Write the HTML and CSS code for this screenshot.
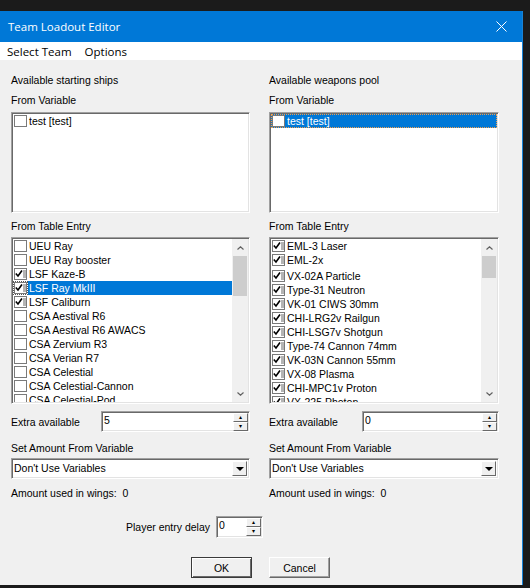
FILE: index.html
```html
<!DOCTYPE html>
<html lang="en">
<head>
  <meta charset="UTF-8">
  <title>Team Loadout Editor</title>
  <link rel="stylesheet" href="styles.css">
</head>
<body>
  <svg class="defs" width="0" height="0">
    <symbol id="cb-off" viewBox="0 0 13 12">
      <rect x="0.5" y="0.5" width="12" height="11" fill="#fff" stroke="#7a7a7a"/>
    </symbol>
    <symbol id="cb-on" viewBox="0 0 13 12">
      <rect x="0.5" y="0.5" width="12" height="11" fill="#fff" stroke="#7a7a7a"/>
      <rect x="9" y="2" width="3" height="8" fill="#b4b4b4"/>
      <path d="M1.8 5.5 L4 8 L8 2.5" fill="none" stroke="#000" stroke-width="1.6"/>
    </symbol>
    <symbol id="up" viewBox="0 0 7 4">
      <path d="M0.5 3.5 L3.5 0.8 L6.5 3.5" fill="none" stroke="#606060" stroke-width="1.2"/>
    </symbol>
    <symbol id="down" viewBox="0 0 7 4">
      <path d="M0.5 0.5 L3.5 3.2 L6.5 0.5" fill="none" stroke="#606060" stroke-width="1.2"/>
    </symbol>
  </svg>

  <div class="window">
    <div class="titlebar">
      <span class="title">Team Loadout Editor</span>
      <svg class="close" width="11" height="11" viewBox="0 0 11 11">
        <path d="M0.5 0.5 L10.5 10.5 M10.5 0.5 L0.5 10.5" stroke="#fff" stroke-width="1"/>
      </svg>
    </div>

    <div class="menubar">
      <span>Select Team</span>
      <span>Options</span>
    </div>

    <div class="client">
      <div class="columns">
        <!-- Ships -->
        <div class="col">
          <div class="label first">Available starting ships</div>
          <div class="label">From Variable</div>
          <div class="listbox var">
            <div class="items">
              <div class="row"><svg class="cb"><use href="#cb-off"/></svg>test [test]</div>
            </div>
          </div>
          <div class="label">From Table Entry</div>
          <div class="listbox table">
            <div class="items">
              <div class="row"><svg class="cb"><use href="#cb-off"/></svg>UEU Ray</div>
              <div class="row"><svg class="cb"><use href="#cb-off"/></svg>UEU Ray booster</div>
              <div class="row"><svg class="cb"><use href="#cb-on"/></svg>LSF Kaze-B</div>
              <div class="row selected"><svg class="cb"><use href="#cb-on"/></svg><span class="text">LSF Ray MkIII</span></div>
              <div class="row"><svg class="cb"><use href="#cb-on"/></svg>LSF Caliburn</div>
              <div class="row"><svg class="cb"><use href="#cb-off"/></svg>CSA Aestival R6</div>
              <div class="row"><svg class="cb"><use href="#cb-off"/></svg>CSA Aestival R6 AWACS</div>
              <div class="row"><svg class="cb"><use href="#cb-off"/></svg>CSA Zervium R3</div>
              <div class="row"><svg class="cb"><use href="#cb-off"/></svg>CSA Verian R7</div>
              <div class="row"><svg class="cb"><use href="#cb-off"/></svg>CSA Celestial</div>
              <div class="row"><svg class="cb"><use href="#cb-off"/></svg>CSA Celestial-Cannon</div>
              <div class="row"><svg class="cb"><use href="#cb-off"/></svg>CSA Celestial-Pod</div>
            </div>
            <div class="scroll">
              <div class="arrow"><svg width="7" height="4"><use href="#up"/></svg></div>
              <div class="track"><div class="thumb ships"></div></div>
              <div class="arrow"><svg width="7" height="4"><use href="#down"/></svg></div>
            </div>
          </div>
          <div class="spinrow">
            <span>Extra available</span>
            <div class="spin wide-left">
              <span class="value">5</span>
              <div class="spinbtns"><div class="sb">&#9652;</div><div class="sb">&#9662;</div></div>
            </div>
          </div>
          <div class="label gap">Set Amount From Variable</div>
          <div class="combo">
            <span class="value">Don't Use Variables</span>
            <div class="drop"><svg width="8" height="4" viewBox="0 0 8 4"><path d="M0 0 H8 L4 4 Z" fill="#000"/></svg></div>
          </div>
          <div class="label used">Amount used in wings:&nbsp; 0</div>
        </div>

        <!-- Weapons -->
        <div class="col">
          <div class="label first">Available weapons pool</div>
          <div class="label">From Variable</div>
          <div class="listbox var">
            <div class="items">
              <div class="row focus"><svg class="cb"><use href="#cb-off"/></svg>test [test]</div>
            </div>
          </div>
          <div class="label">From Table Entry</div>
          <div class="listbox table">
            <div class="items">
              <div class="row"><svg class="cb"><use href="#cb-on"/></svg>EML-3 Laser</div>
              <div class="row spaced"><svg class="cb"><use href="#cb-on"/></svg>EML-2x</div>
              <div class="row"><svg class="cb"><use href="#cb-on"/></svg>VX-02A Particle</div>
              <div class="row"><svg class="cb"><use href="#cb-on"/></svg>Type-31 Neutron</div>
              <div class="row"><svg class="cb"><use href="#cb-on"/></svg>VK-01 CIWS 30mm</div>
              <div class="row"><svg class="cb"><use href="#cb-on"/></svg>CHI-LRG2v Railgun</div>
              <div class="row"><svg class="cb"><use href="#cb-on"/></svg>CHI-LSG7v Shotgun</div>
              <div class="row"><svg class="cb"><use href="#cb-on"/></svg>Type-74 Cannon 74mm</div>
              <div class="row"><svg class="cb"><use href="#cb-on"/></svg>VK-03N Cannon 55mm</div>
              <div class="row"><svg class="cb"><use href="#cb-on"/></svg>VX-08 Plasma</div>
              <div class="row"><svg class="cb"><use href="#cb-on"/></svg>CHI-MPC1v Proton</div>
              <div class="row"><svg class="cb"><use href="#cb-on"/></svg>VX-225 Photon</div>
            </div>
            <div class="scroll">
              <div class="arrow"><svg width="7" height="4"><use href="#up"/></svg></div>
              <div class="track"><div class="thumb weapons"></div></div>
              <div class="arrow"><svg width="7" height="4"><use href="#down"/></svg></div>
            </div>
          </div>
          <div class="spinrow">
            <span>Extra available</span>
            <div class="spin wide-right">
              <span class="value">0</span>
              <div class="spinbtns"><div class="sb">&#9652;</div><div class="sb">&#9662;</div></div>
            </div>
          </div>
          <div class="label gap">Set Amount From Variable</div>
          <div class="combo">
            <span class="value">Don't Use Variables</span>
            <div class="drop"><svg width="8" height="4" viewBox="0 0 8 4"><path d="M0 0 H8 L4 4 Z" fill="#000"/></svg></div>
          </div>
          <div class="label used">Amount used in wings:&nbsp; 0</div>
        </div>
      </div>

      <div class="delay">
        <span>Player entry delay</span>
        <div class="spin small">
          <span class="value">0</span>
          <div class="spinbtns"><div class="sb">&#9652;</div><div class="sb">&#9662;</div></div>
        </div>
      </div>

      <div class="buttons">
        <button class="btn default">OK</button>
        <button class="btn">Cancel</button>
      </div>
    </div>
  </div>
</body>
</html>
```

FILE: styles.css
```css
body {
  margin: 0;
  width: 530px;
  height: 588px;
  overflow: hidden;
  background: #1b1b1b;
}
.defs {
  position: absolute;
}
.window {
  margin-top: 11px;
  width: 523px;
  height: 574px;
  box-sizing: border-box;
  border-right: 1px solid #1883d7;
  display: flex;
  flex-direction: column;
  background: #f0f0f0;
}
.titlebar {
  height: 31px;
  background: #0078d7;
  color: #fff;
  display: flex;
  align-items: center;
  justify-content: space-between;
  padding: 0 15px 0 8px;
  font-family: "Open Sans", sans-serif;
  font-size: 11.5px;
}
.menubar {
  height: 18px;
  background: #fff;
  display: flex;
  align-items: center;
  gap: 13px;
  padding-left: 7px;
  font-family: "Open Sans", sans-serif;
  font-size: 11.5px;
  color: #000;
}
.client {
  flex: 1;
  font-family: "Liberation Sans", Arial, sans-serif;
  font-size: 10.5px;
  color: #000;
}
.columns {
  display: grid;
  grid-template-columns: 239px 230px;
  column-gap: 19px;
  padding-left: 11px;
}
.col {
  display: flex;
  flex-direction: column;
}
.label {
  height: 13px;
  line-height: 13px;
  margin-top: 7px;
  white-space: nowrap;
}
.label.first {
  margin-top: 14px;
}
.label.gap {
  margin-top: 10px;
}
.label.used {
  margin-top: 8px;
}
.listbox {
  box-sizing: border-box;
  background: #fff;
  border: 1px solid;
  border-color: #a0a0a0 #fff #fff #a0a0a0;
  box-shadow: inset 1px 1px 0 #696969, inset -1px -1px 0 #e3e3e3;
  padding: 1px;
  display: flex;
  overflow: hidden;
}
.listbox.var {
  margin-top: 5px;
  height: 101px;
}
.listbox.table {
  margin-top: 4px;
  height: 167px;
}
.items {
  flex: 1;
  overflow: hidden;
}
.row {
  height: 14px;
  line-height: 14px;
  display: flex;
  align-items: center;
  white-space: nowrap;
  padding-left: 1px;
}
.row.spaced {
  margin-bottom: 2px;
}
.cb {
  width: 13px;
  height: 12px;
  margin-right: 2px;
  flex: none;
}
.row.selected .text {
  flex: 1;
  background: #0078d7;
  color: #fff;
  height: 14px;
  margin-left: -1px;
  padding-left: 1px;
}
.row.selected .cb {
  outline: 1px dotted #555;
}
.row.focus {
  background: #0078d7;
  color: #fff;
  outline: 1px dotted #f0a050;
  outline-offset: -1px;
}
.scroll {
  width: 16px;
  background: #f0f0f0;
  display: flex;
  flex-direction: column;
}
.arrow {
  height: 17px;
  display: flex;
  align-items: center;
  justify-content: center;
}
.track {
  flex: 1;
}
.thumb {
  margin: 0 1px;
  background: #cdcdcd;
}
.thumb.ships {
  height: 40px;
}
.thumb.weapons {
  height: 22px;
}
.spinrow {
  margin-top: 7px;
  height: 21px;
  display: flex;
  align-items: center;
  justify-content: space-between;
}
.spin {
  box-sizing: border-box;
  height: 21px;
  background: #fff;
  border: 1px solid;
  border-color: #a0a0a0 #fff #fff #a0a0a0;
  box-shadow: inset 1px 1px 0 #696969, inset -1px -1px 0 #e3e3e3;
  display: flex;
  padding: 1px 1px 1px 2px;
}
.spin.wide-left {
  width: 149px;
}
.spin.wide-right {
  width: 137px;
}
.spin .value {
  flex: 1;
  line-height: 14px;
}
.spinbtns {
  width: 15px;
  display: flex;
  flex-direction: column;
}
.sb {
  flex: 1;
  box-sizing: border-box;
  background: #f0f0f0;
  border: 1px solid;
  border-color: #fff #696969 #696969 #fff;
  font-size: 6px;
  line-height: 7px;
  text-align: center;
  color: #000;
}
.combo {
  margin-top: 3px;
  box-sizing: border-box;
  height: 21px;
  background: #fff;
  border: 1px solid;
  border-color: #a0a0a0 #fff #fff #a0a0a0;
  box-shadow: inset 1px 1px 0 #696969, inset -1px -1px 0 #e3e3e3;
  display: flex;
  align-items: stretch;
  padding: 2px;
}
.combo .value {
  flex: 1;
  line-height: 15px;
}
.drop {
  width: 15px;
  box-sizing: border-box;
  background: #f0f0f0;
  border: 1px solid;
  border-color: #fff #696969 #696969 #fff;
  display: flex;
  align-items: center;
  justify-content: center;
}
.delay {
  margin-top: 16px;
  padding-left: 126px;
  display: flex;
  align-items: center;
  gap: 6px;
  height: 22px;
}
.spin.small {
  width: 47px;
  height: 22px;
}
.buttons {
  margin-top: 19px;
  padding-left: 191px;
  display: flex;
  gap: 17px;
}
.btn {
  width: 61px;
  height: 21px;
  box-sizing: border-box;
  background: #f0f0f0;
  font-family: "Liberation Sans", Arial, sans-serif;
  font-size: 10.5px;
  color: #000;
  border: 1px solid;
  border-color: #fff #696969 #696969 #fff;
  box-shadow: inset -1px -1px 0 #a0a0a0;
  padding: 0;
}
.btn.default {
  border: 1px solid #3a3a3a;
  box-shadow: inset 1px 1px 0 #fff, inset -1px -1px 0 #696969;
}
```
